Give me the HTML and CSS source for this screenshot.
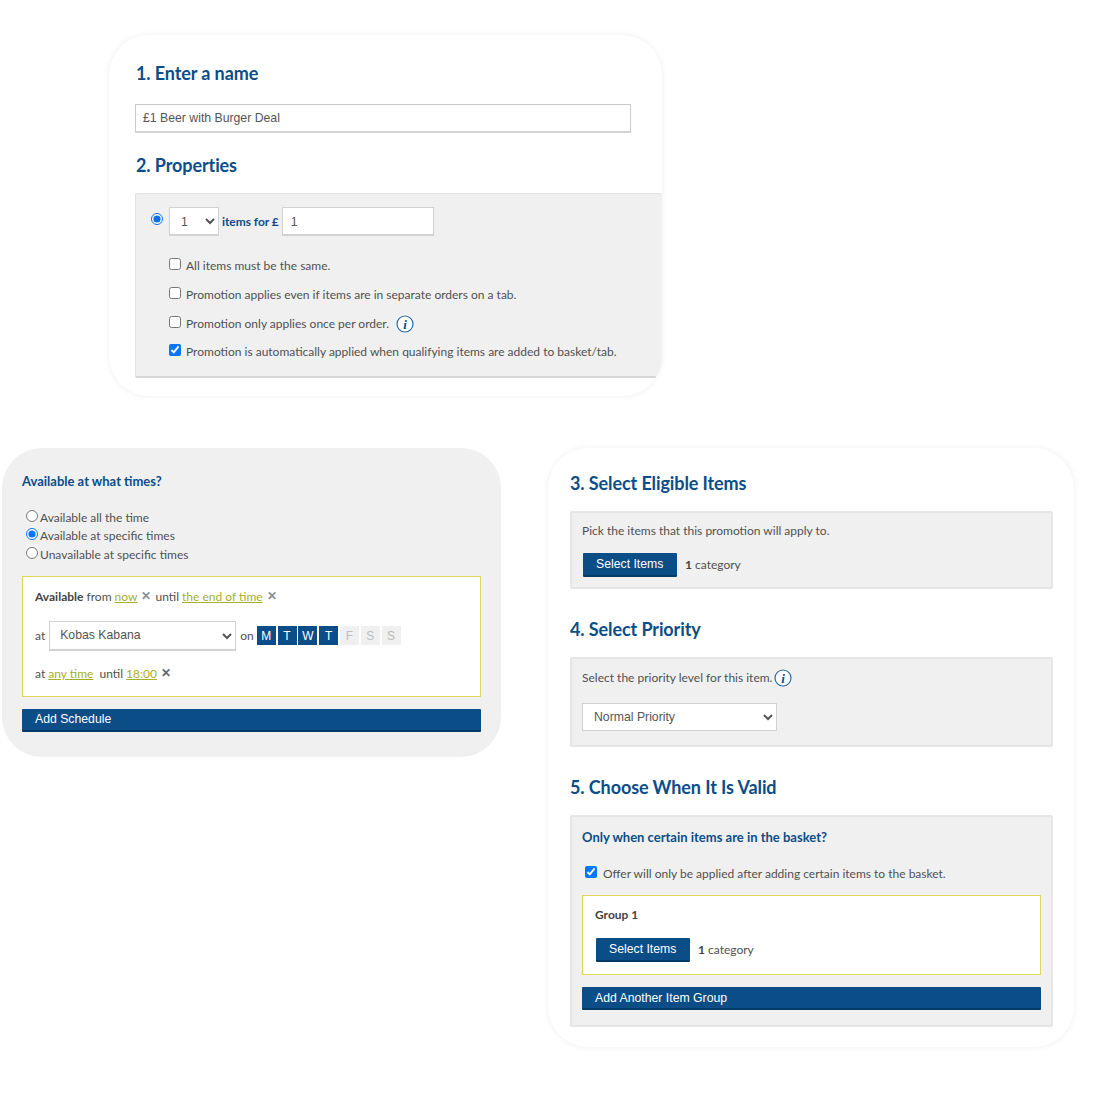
FILE: index.html
```html
<!DOCTYPE html>
<html lang="en">
<head>
    <meta charset="UTF-8">
    <title>Promotion</title>
    <link rel="stylesheet" href="styles.css">
</head>
<body>
<div class="card card--name">
    <h2 class="card__title card__title--first">1. Enter a name</h2>
    <input class="name-input" type="text" value="£1 Beer with Burger Deal">
    <h2 class="card__title card__title--props">2. Properties</h2>
    <div class="panel panel--props">
        <div class="deal">
            <input class="deal__radio" type="radio" checked>
            <select class="deal__count"><option>1</option></select>
            <span class="deal__label">items for £</span>
            <input class="deal__price" type="text" value="1">
        </div>
        <label class="option option--first"><input type="checkbox"><span>All items must be the same.</span></label>
        <label class="option"><input type="checkbox"><span>Promotion applies even if items are in separate orders on a tab.</span></label>
        <label class="option"><input type="checkbox"><span>Promotion only applies once per order.</span>
            <svg class="info info--spaced" viewBox="0 0 18 18"><circle cx="9" cy="9" r="8"/><text x="9" y="13.5">i</text></svg>
        </label>
        <label class="option option--last"><input type="checkbox" checked><span>Promotion is automatically applied when qualifying items are added to basket/tab.</span></label>
    </div>
</div>

<div class="row">
    <div class="card card--times">
        <h3 class="subtitle">Available at what times?</h3>
        <div class="radios">
            <label class="radios__item"><input type="radio" name="avail"><span>Available all the time</span></label>
            <label class="radios__item"><input type="radio" name="avail" checked><span>Available at specific times</span></label>
            <label class="radios__item"><input type="radio" name="avail"><span>Unavailable at specific times</span></label>
        </div>
        <div class="box box--schedule">
            <div class="sched-line">
                <b>Available</b>&nbsp;from&nbsp;<a class="link" href="#">now</a><span class="remove">✕</span>until&nbsp;<a class="link" href="#">the end of time</a><span class="remove">✕</span>
            </div>
            <div class="sched-place">
                <span>at</span>
                <select class="venue"><option>Kobas Kabana</option></select>
                <span>on</span>
                <div class="days">
                    <span class="day day--on">M</span>
                    <span class="day day--on">T</span>
                    <span class="day day--on">W</span>
                    <span class="day day--on">T</span>
                    <span class="day">F</span>
                    <span class="day">S</span>
                    <span class="day">S</span>
                </div>
            </div>
            <div class="sched-line">
                at&nbsp;<a class="link" href="#">any time</a>&nbsp;&nbsp;until&nbsp;<a class="link" href="#">18:00</a><span class="remove remove--dark">✕</span>
            </div>
        </div>
        <button class="btn btn--wide">Add Schedule</button>
    </div>

    <div class="card card--steps">
        <h2 class="card__title">3. Select Eligible Items</h2>
        <div class="panel panel--items">
            <p class="panel__text">Pick the items that this promotion will apply to.</p>
            <div class="picker">
                <button class="btn">Select Items</button>
                <span class="picker__count"><b>1</b> category</span>
            </div>
        </div>
        <h2 class="card__title card__title--next">4. Select Priority</h2>
        <div class="panel panel--priority">
            <p class="panel__text panel__text--info">Select the priority level for this item.
                <svg class="info" viewBox="0 0 18 18"><circle cx="9" cy="9" r="8"/><text x="9" y="13.5">i</text></svg>
            </p>
            <select class="priority"><option>Normal Priority</option></select>
        </div>
        <h2 class="card__title card__title--next">5. Choose When It Is Valid</h2>
        <div class="panel panel--valid">
            <h3 class="subtitle subtitle--panel">Only when certain items are in the basket?</h3>
            <label class="offer"><input type="checkbox" checked><span>Offer will only be applied after adding certain items to the basket.</span></label>
            <div class="box box--group">
                <div class="group__name">Group 1</div>
                <div class="picker">
                    <button class="btn">Select Items</button>
                    <span class="picker__count"><b>1</b> category</span>
                </div>
            </div>
            <button class="btn btn--wide">Add Another Item Group</button>
        </div>
    </div>
</div>
</body>
</html>
```

FILE: styles.css
```css
* {
    box-sizing: border-box;
}

html, body {
    margin: 0;
    padding: 0;
}

body {
    width: 1112px;
    height: 1093px;
    overflow: hidden;
    background: #fff;
    color: #505050;
    font-family: "Lato", "Open Sans", sans-serif;
    font-size: 12px;
}

.card {
    border-radius: 40px;
    background: #fff;
    box-shadow: 0 0 6px rgba(0, 0, 0, 0.07);
}

.card--name {
    width: 553px;
    height: 361px;
    margin: 35px 0 0 109px;
    padding: 27px 0 0 27px;
    overflow: hidden;
}

.row {
    display: flex;
    align-items: flex-start;
    gap: 47px;
    margin: 52px 0 0 2px;
}

.card--times {
    width: 499px;
    height: 309px;
    padding: 25px 20px 0;
    background: #f0f0f0;
    box-shadow: none;
}

.card--steps {
    width: 526px;
    height: 599px;
    padding: 24px 21px 0 22px;
}

.card__title {
    margin: 0;
    color: #0b4d87;
    font-size: 18px;
    line-height: 23px;
    font-weight: 700;
    letter-spacing: -0.1px;
}

.card__title--props {
    margin: 21px 0 0;
}

.card__title--next {
    margin: 29px 0 0;
}

.name-input {
    display: block;
    width: 496px;
    height: 29px;
    margin: 19px 0 0 -1px;
    padding: 0 7px;
    border: 1px solid #c9c9c9;
    border-bottom: 2px solid #d4d4d4;
    color: #555;
    font-family: "Liberation Sans", Arial, sans-serif;
    font-size: 12.25px;
}

.panel {
    border: 2px solid #e6e6e6;
    border-radius: 2px;
    background: #f0f0f0;
}

.panel--props {
    height: 185px;
    margin: 16px 0 0 -1px;
    padding: 13px 0 0 15px;
    border-width: 1px 0 2px 1px;
    border-color: #e2e2e2 #e2e2e2 #d6d6d6;
}

.panel--items {
    height: 78px;
    margin-top: 16px;
    padding: 10px 10px 0;
}

.panel--priority {
    height: 90px;
    margin-top: 16px;
    padding: 10px 10px 0;
}

.panel--valid {
    height: 212px;
    margin-top: 16px;
    padding: 10px 10px 0;
}

.panel__text {
    margin: 0;
    line-height: 16px;
}

.panel__text--info {
    display: flex;
    align-items: center;
    gap: 2px;
    height: 18px;
}

.deal {
    display: flex;
    align-items: center;
    height: 29px;
}

.deal__radio {
    width: 12px;
    height: 12px;
    margin: -5px 6px 0 0;
    accent-color: #0b6fe8;
}

.deal__count {
    width: 50px;
    height: 29px;
    padding: 1px 0 0 7px;
    border: 1px solid #d2d2d2;
    border-bottom-width: 2px;
    border-radius: 0;
    background-color: #fff;
    color: #555;
    font-family: "Liberation Sans", Arial, sans-serif;
    font-size: 12.25px;
}

.deal__label {
    margin: 0 3px;
    color: #0b4d87;
    font-weight: 700;
    font-size: 12px;
    letter-spacing: -0.05px;
}

.deal__price {
    width: 152px;
    height: 29px;
    padding: 2px 8px 0;
    border: 1px solid #d2d2d2;
    border-bottom-width: 2px;
    color: #555;
    font-family: "Liberation Sans", Arial, sans-serif;
    font-size: 12.25px;
}

.option {
    display: flex;
    align-items: center;
    height: 18px;
    margin: 11px 0 0 18px;
}

.option--first {
    margin-top: 20.5px;
}

.option--last {
    margin-top: 10px;
}

.option input {
    width: 12px;
    height: 12px;
    margin: -3px 5px 0 0;
}

.info {
    flex: none;
    width: 18px;
    height: 18px;
}

.info circle {
    fill: #fff;
    stroke: #2f6aa3;
    stroke-width: 1.2;
}

.info text {
    fill: #0b4d87;
    font-family: "Liberation Serif", serif;
    font-size: 13px;
    font-style: italic;
    font-weight: 700;
    text-anchor: middle;
}

.info--spaced {
    margin-left: 7px;
}

.subtitle {
    margin: 0;
    color: #0b4d87;
    font-size: 13px;
    line-height: 16px;
    font-weight: 700;
}

.subtitle--panel {
    line-height: 20px;
}

.radios {
    margin: 19px 0 12px 4px;
}

.radios__item {
    display: flex;
    align-items: center;
    height: 18.5px;
}

.radios__item input {
    width: 12px;
    height: 12px;
    margin: -3px 2px 0 0;
}

.box {
    border: 1px solid #dcd85a;
    background: #fff;
}

.box--schedule {
    height: 121px;
    padding: 12px 12px 0;
}

.box--group {
    height: 80px;
    margin-bottom: 12px;
    padding: 10px 12px 0;
}

.sched-line {
    display: flex;
    align-items: center;
    height: 16px;
}

.sched-line b {
    color: #444;
}

.link {
    color: #a9ad2c;
}

.remove {
    margin: -3px 4px 0 4px;
    color: #8a8f96;
    font-size: 12px;
    font-weight: 700;
}

.remove--dark {
    color: #666;
}

.sched-place {
    display: flex;
    align-items: center;
    gap: 4px;
    height: 30px;
    margin: 16px 0 15px;
}

.venue {
    width: 187px;
    height: 30px;
    padding-left: 6px;
    border: 1px solid #d2d2d2;
    border-bottom-width: 2px;
    border-radius: 0;
    background-color: #fff;
    color: #555;
    font-family: "Liberation Sans", Arial, sans-serif;
    font-size: 12.25px;
}

.days {
    display: flex;
    gap: 1.8px;
    margin-left: -1px;
}

.day {
    display: flex;
    align-items: center;
    justify-content: center;
    width: 19px;
    height: 19px;
    background: #f0f0f0;
    color: #bbb;
    font-family: "Liberation Sans", Arial, sans-serif;
    font-size: 12px;
}

.day--on {
    background: #0b4d87;
    color: #fff;
}

.btn {
    display: block;
    height: 24px;
    padding: 0 13px;
    border: 0;
    border-bottom: 2px solid #063a66;
    border-radius: 1px;
    background: #0b4d87;
    color: #fff;
    font-family: "Liberation Sans", Arial, sans-serif;
    font-size: 12.25px;
    text-align: left;
    white-space: nowrap;
}

.btn--wide {
    width: 100%;
    height: 23px;
    margin-top: 12px;
}

.box--group + .btn--wide {
    margin-top: 0;
}

.picker {
    display: flex;
    align-items: center;
    gap: 8px;
    margin: 14px 0 0 1px;
}

.picker .btn {
    flex: none;
    width: 94px;
    padding: 0 13px;
}

.picker__count {
    margin-top: -2px;
}

.picker__count b {
    color: #444;
}

.offer {
    display: flex;
    align-items: center;
    height: 18px;
    margin: 17px 0 13px 3px;
}

.offer input {
    width: 12px;
    height: 12px;
    margin: -3px 6px 0 0;
}

.group__name {
    color: #444;
    font-weight: 700;
    line-height: 18px;
}

.priority {
    display: block;
    width: 195px;
    height: 28px;
    margin-top: 16px;
    padding-left: 7px;
    border: 1px solid #d2d2d2;
    border-radius: 0;
    background-color: #fff;
    color: #555;
    font-family: "Liberation Sans", Arial, sans-serif;
    font-size: 12.25px;
}
```
